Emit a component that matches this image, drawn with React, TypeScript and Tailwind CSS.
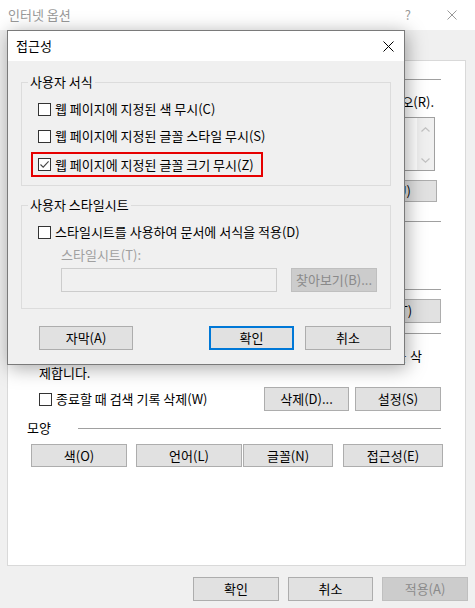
import React from "react";

const font = "font-['Noto_Sans_CJK_KR','Noto_Sans',sans-serif]";

function Btn({
  children,
  className = "",
  kind = "normal",
}: {
  children: React.ReactNode;
  className?: string;
  kind?: "normal" | "disabled" | "primary";
}) {
  const look =
    kind === "disabled"
      ? "border border-[#bfbfbf] bg-[#cccccc] text-[#8a8a8a]"
      : kind === "primary"
      ? "border-2 border-[#0078d7] bg-[#e1e1e1] text-black"
      : "border border-[#adadad] bg-[#e1e1e1] text-black";
  return (
    <div className={`flex shrink-0 items-center justify-center whitespace-nowrap ${look} ${className}`}>
      {children}
    </div>
  );
}

function Box({ checked = false }: { checked?: boolean }) {
  return (
    <div className="flex h-[13px] w-[13px] shrink-0 items-center justify-center border border-[#333333] bg-white">
      {checked && (
        <svg width="11" height="11" viewBox="0 0 11 11">
          <path d="M1.5 5.5 L4.2 8.2 L9.6 2.4" fill="none" stroke="#444444" strokeWidth="1.1" />
        </svg>
      )}
    </div>
  );
}

function Radio() {
  return <div className="h-[13px] w-[13px] shrink-0 rounded-full border border-[#333333] bg-white" />;
}

function Section({ label }: { label?: string }) {
  return (
    <div className="flex h-[16px] items-center justify-between">
      <span className="whitespace-nowrap">{label}</span>
      <div className="h-px w-[363px] bg-[#a0a0a0]" />
    </div>
  );
}

function Close({ color, size }: { color: string; size: number }) {
  return (
    <svg width={size} height={size} viewBox={`0 0 ${size} ${size}`}>
      <path d={`M0.5 0.5 L${size - 0.5} ${size - 0.5} M${size - 0.5} 0.5 L0.5 ${size - 0.5}`} stroke={color} strokeWidth="1" fill="none" />
    </svg>
  );
}

export default function App() {
  return (
    <div className={`relative h-[608px] w-[475px] overflow-hidden bg-[#f0f0f0] text-[13px] leading-[16px] text-black ${font}`}>
      {/* background window title bar */}
      <div className="flex h-[30px] items-center bg-white pl-[8px]">
        <span className="text-[#999999]">인터넷 옵션</span>
        <span className="ml-auto text-[13px] text-[#999999]">?</span>
        <div className="ml-[36px] mr-[18px]">
          <Close color="#999999" size={10} />
        </div>
      </div>

      {/* tab strip (covered by the dialog) */}
      <div className="flex h-[30px] items-end pl-[9px]">
        <div className="h-[21px] w-[40px] border border-b-0 border-[#d9d9d9] bg-white" />
        <div className="h-[19px] w-[40px] border border-b-0 border-l-0 border-[#d9d9d9]" />
        <div className="h-[19px] w-[60px] border border-b-0 border-l-0 border-[#d9d9d9]" />
      </div>

      {/* tab panel */}
      <div className="ml-[7px] flex h-[506px] w-[459px] flex-col border border-[#d9d9d9] bg-white pl-[19px] pr-[24px] pt-[10px]">
        <Section />
        <div className="mt-[7px] flex h-[16px] items-center">
          <span className="ml-auto mr-[7px] whitespace-nowrap">입력하십시오(R).</span>
        </div>
        <div className="ml-[41px] mr-[6px] mt-[7px] flex h-[54px] border border-[#a0a0a0] bg-white">
          <div className="flex-1" />
          <div className="flex w-[17px] flex-col items-center justify-between bg-[#f0f0f0] pb-[7px] pt-[9px]">
            <svg width="9" height="5" viewBox="0 0 9 5">
              <path d="M0.5 4.5 L4.5 0.8 L8.5 4.5" stroke="#c2c2c2" fill="none" strokeWidth="1.2" />
            </svg>
            <svg width="9" height="5" viewBox="0 0 9 5">
              <path d="M0.5 0.5 L4.5 4.2 L8.5 0.5" stroke="#c2c2c2" fill="none" strokeWidth="1.2" />
            </svg>
          </div>
        </div>
        <div className="mr-[4px] mt-[9px] flex h-[22px] justify-end gap-[7px]">
          <Btn className="w-[124px]">새 탭 사용(U)</Btn>
        </div>

        <div className="mt-[11px]">
          <Section />
        </div>
        <div className="mt-[8px] flex flex-col gap-[6px] pl-[12px]">
          <div className="flex h-[16px] items-center">
            <Radio />
          </div>
          <div className="flex h-[16px] items-center">
            <Radio />
          </div>
        </div>

        <div className="mt-[6px]">
          <Section />
        </div>
        <div className="mt-[2px] flex h-[24px] items-center pl-[12px]">
          <Btn className="ml-auto h-[24px] w-[86px]">탭(T)</Btn>
        </div>

        <div className="mt-[2px]">
          <Section />
        </div>
        <div className="mt-[6px] pl-[12px] leading-[17px]">
          <div className="whitespace-nowrap tracking-[0.35px]">임시 파일, 열어본 페이지 목록, 쿠키, 저장된 암호 및 웹 양식 정보를 삭</div>
          <div>제합니다.</div>
        </div>
        <div className="mt-[6px] flex h-[24px] items-center pl-[12px]">
          <Box />
          <span className="ml-[4px] whitespace-nowrap">종료할 때 검색 기록 삭제(W)</span>
          <Btn className="ml-auto h-[24px] w-[85px]">삭제(D)...</Btn>
          <Btn className="ml-[6px] h-[24px] w-[86px]">설정(S)</Btn>
        </div>

        <div className="mt-[9px]">
          <Section label="모양" />
        </div>
        <div className="mt-[8px] flex h-[23px]">
          <Btn className="ml-[4px] w-[96px]">색(O)</Btn>
          <Btn className="ml-[9px] w-[106px]">언어(L)</Btn>
          <Btn className="ml-[1px] w-[90px]">글꼴(N)</Btn>
          <Btn className="ml-[10px] w-[100px]">접근성(E)</Btn>
        </div>
      </div>

      {/* bottom buttons */}
      <div className="mt-[11px] flex justify-end gap-[9px] pr-[7px]">
        <Btn className="h-[24px] w-[86px]">확인</Btn>
        <Btn className="h-[24px] w-[85px]">취소</Btn>
        <Btn kind="disabled" className="h-[24px] w-[86px]">적용(A)</Btn>
      </div>

      {/* 접근성 dialog */}
      <div className="absolute left-[7px] top-[30px] flex h-[335px] w-[398px] flex-col border border-[#7a7a7a] bg-[#f0f0f0] shadow-[2px_3px_18px_rgba(0,0,0,0.35)]">
        <div className="flex h-[30px] shrink-0 items-center bg-white pl-[8px] pr-[10px]">
          <span>접근성</span>
          <div className="ml-auto">
            <Close color="#000000" size={11} />
          </div>
        </div>
        <div className="flex flex-col px-[13px] pt-[13px]">
          <fieldset className="m-0 border border-[#dcdcdc] p-0">
            <legend className="ml-[6px] px-[2px] leading-[16px]">사용자 서식</legend>
            <div className="pb-[8px] pl-[16px]">
              <div className="mt-[11px] flex h-[16px] items-center">
                <Box />
                <span className="ml-[4px] whitespace-nowrap">웹 페이지에 지정된 색 무시(C)</span>
              </div>
              <div className="mt-[11px] flex h-[16px] items-center">
                <Box />
                <span className="ml-[4px] whitespace-nowrap">웹 페이지에 지정된 글꼴 스타일 무시(S)</span>
              </div>
              <div className="-ml-[7px] mt-[8px] flex h-[25px] w-[232px] items-center border-2 border-[#e60000] pl-[5px]">
                <Box checked />
                <span className="ml-[4px] whitespace-nowrap">웹 페이지에 지정된 글꼴 크기 무시(Z)</span>
              </div>
            </div>
          </fieldset>

          <fieldset className="m-0 mt-[11px] border border-[#dcdcdc] p-0">
            <legend className="ml-[6px] px-[2px] leading-[16px]">사용자 스타일시트</legend>
            <div className="pb-[16px] pl-[16px]">
              <div className="mt-[11px] flex h-[16px] items-center">
                <Box />
                <span className="ml-[4px] whitespace-nowrap">스타일시트를 사용하여 문서에 서식을 적용(D)</span>
              </div>
              <div className="ml-[23px] mt-[7px] h-[16px] text-[#a0a0a0]">스타일시트(T):</div>
              <div className="ml-[23px] mt-[5px] flex h-[24px]">
                <div className="h-[24px] w-[216px] border border-[#cccccc] bg-[#f0f0f0]" />
                <Btn kind="disabled" className="ml-[14px] h-[24px] w-[86px]">찾아보기(B)...</Btn>
              </div>
            </div>
          </fieldset>

          <div className="mt-[17px] flex h-[24px]">
            <Btn className="ml-[18px] h-[24px] w-[94px]">자막(A)</Btn>
            <Btn kind="primary" className="ml-auto h-[24px] w-[85px]">확인</Btn>
            <Btn className="ml-[11px] h-[24px] w-[86px]">취소</Btn>
          </div>
        </div>
      </div>
    </div>
  );
}
